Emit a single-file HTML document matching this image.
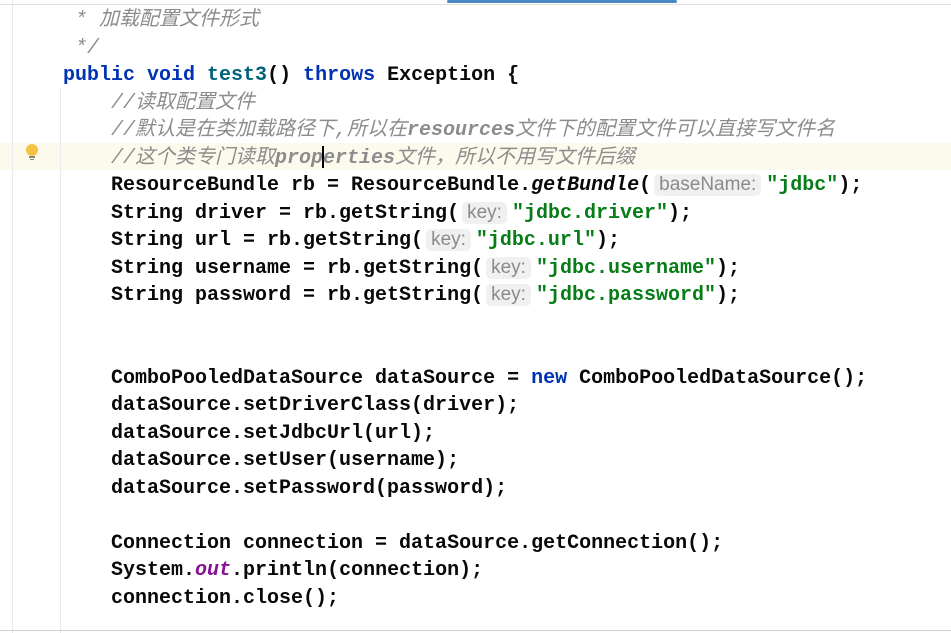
<!DOCTYPE html>
<html><head><meta charset="utf-8"><style>
body{margin:0;width:951px;height:633px;overflow:hidden;background:#fff;position:relative}
.v{position:absolute;top:0;bottom:0;width:1px;background:#ebebeb}
.hl{position:absolute;left:0;right:0;top:143px;height:27px;background:#fcfaed}
.code{position:absolute;left:63px;top:7px;font-family:"Liberation Mono","Noto Sans CJK SC",monospace;font-size:20px;color:#080808;font-weight:bold}
.code div{height:27.5px;line-height:27.5px;white-space:pre;overflow:visible}
.k{color:#0033b3}.m{color:#00627a}.s{color:#067d17}.c{color:#8c8c8c;font-style:italic;font-weight:normal}.cb{color:#8c8c8c;font-style:italic;font-weight:bold}
.f{color:#871094;font-style:italic}.i{font-style:italic}
.h{font-family:"Liberation Sans",sans-serif;font-weight:normal;font-size:19px;line-height:22px;color:#8a8a8a;background:#f0f0f0;border-radius:5px;padding:0 5px;margin:0 5px 0 3px;display:inline-block}
.cur{display:inline-block;width:2px;height:22px;background:#000;vertical-align:middle;margin:0 -1px}
</style></head><body>
<div class="hl"></div>
<div class="v" style="left:12px"></div>
<div class="v" style="left:60px;top:88px"></div>
<div style="position:absolute;left:447px;top:0;width:230px;height:3px;background:#4a88c7;border-radius:2px"></div>
<div style="position:absolute;left:0;right:0;top:4px;height:1px;background:#e0e0e0"></div>
<div style="position:absolute;left:26px;top:144px;width:12px;height:12px;border-radius:6px;background:#f4c442"></div>
<div style="position:absolute;left:29px;top:156px;width:6px;height:2px;background:#888"></div>
<div style="position:absolute;left:30px;top:159px;width:4px;height:1px;background:#888"></div>
<div style="position:absolute;left:0;right:0;top:630px;height:1px;background:#d0d0d0"></div>
<div class="code">
<div><span class="c"> * 加载配置文件形式</span></div>
<div><span class="c"> */</span></div>
<div><span class="k">public void</span> <span class="m">test3</span>() <span class="k">throws</span> Exception {</div>
<div>    <span class="c">//读取配置文件</span></div>
<div>    <span class="c">//默认是在类加载路径下,所以在<span class="cb">resources</span>文件下的配置文件可以直接写文件名</span></div>
<div>    <span class="c">//这个类专门读取<span class="cb">prop<span class="cur"></span>erties</span>文件，所以不用写文件后缀</span></div>
<div>    ResourceBundle rb = ResourceBundle.<span class="i">getBundle</span>(<span class="h">baseName:</span><span class="s">"jdbc"</span>);</div>
<div>    String driver = rb.getString(<span class="h">key:</span><span class="s">"jdbc.driver"</span>);</div>
<div>    String url = rb.getString(<span class="h">key:</span><span class="s">"jdbc.url"</span>);</div>
<div>    String username = rb.getString(<span class="h">key:</span><span class="s">"jdbc.username"</span>);</div>
<div>    String password = rb.getString(<span class="h">key:</span><span class="s">"jdbc.password"</span>);</div>
<div> </div>
<div> </div>
<div>    ComboPooledDataSource dataSource = <span class="k">new</span> ComboPooledDataSource();</div>
<div>    dataSource.setDriverClass(driver);</div>
<div>    dataSource.setJdbcUrl(url);</div>
<div>    dataSource.setUser(username);</div>
<div>    dataSource.setPassword(password);</div>
<div> </div>
<div>    Connection connection = dataSource.getConnection();</div>
<div>    System.<span class="f">out</span>.println(connection);</div>
<div>    connection.close();</div>
</div>
</body></html>
